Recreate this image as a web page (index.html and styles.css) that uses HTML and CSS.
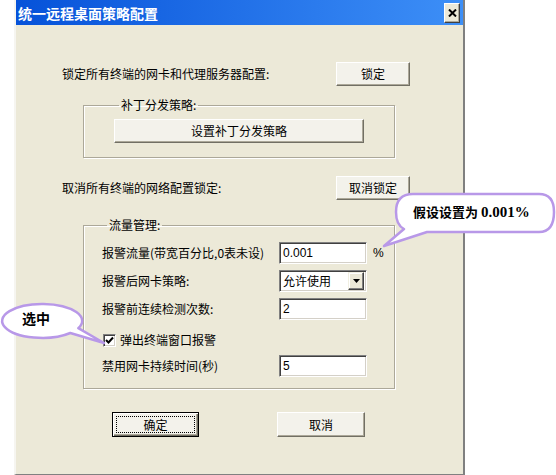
FILE: index.html
```html
<!DOCTYPE html>
<html lang="zh-CN">
<head>
<meta charset="utf-8">
<title>统一远程桌面策略配置</title>
<link rel="stylesheet" href="styles.css">
</head>
<body>
<div class="window">
  <div class="titlebar">
    <span class="title">统一远程桌面策略配置</span>
    <span class="close"><svg width="9" height="8" viewBox="0 0 9 8"><path d="M1 0.5 L8 7.5 M8 0.5 L1 7.5" stroke="#000" stroke-width="2"/></svg></span>
  </div>
  <div class="content">
    <div class="row r1">
      <span>锁定所有终端的网卡和代理服务器配置:</span>
      <button class="btn">锁定</button>
    </div>
    <fieldset class="group g1">
      <legend>补丁分发策略:</legend>
      <button class="btn wide">设置补丁分发策略</button>
    </fieldset>
    <div class="row r2">
      <span>取消所有终端的网络配置锁定:</span>
      <button class="btn">取消锁定</button>
    </div>
    <fieldset class="group g2">
      <legend>流量管理:</legend>
      <div class="field fa">
        <span class="lbl">报警流量(带宽百分比,0表未设)</span>
        <span class="input">0.001</span>
        <span class="unit">%</span>
      </div>
      <div class="field fb">
        <span class="lbl">报警后网卡策略:</span>
        <span class="input select"><span class="sel-text">允许使用</span><span class="drop"><svg width="7" height="4" viewBox="0 0 7 4"><path d="M0 0 H7 L3.5 4 Z" fill="#000"/></svg></span></span>
      </div>
      <div class="field fc">
        <span class="lbl">报警前连续检测次数:</span>
        <span class="input">2</span>
      </div>
      <div class="field fd">
        <span class="check"><svg width="9" height="9" viewBox="0 0 9 9"><path d="M1 4 L3.5 6.5 L8 1.5" stroke="#000" stroke-width="2" fill="none"/></svg></span>
        <span class="check-lbl">弹出终端窗口报警</span>
      </div>
      <div class="field fe">
        <span class="lbl">禁用网卡持续时间(秒)</span>
        <span class="input">5</span>
      </div>
    </fieldset>
    <div class="actions">
      <button class="btn act default"><span class="focus">确定</span></button>
      <button class="btn act">取消</button>
    </div>
  </div>
</div>

<svg class="bubbles" width="556" height="475" viewBox="0 0 556 475">
  <path d="M413 194 H539 Q554 194 554 212 Q554 232 539 232 H427 L384 246 L404 229 Q396 225 396 212 Q396 194 413 194 Z" fill="#fff" stroke="#B898E8" stroke-width="2.5" stroke-linejoin="round"/>
  <path d="M78.3 328.2 A40 17 0 1 0 70.3 333 L104 343 Z" fill="#fff" stroke="#B898E8" stroke-width="2.5" stroke-linejoin="round"/>
</svg>
<div class="callout c1"><span class="cjk">假设设置为</span> <span class="num">0.001%</span></div>
<div class="callout c2">选中</div>
</body>
</html>
```

FILE: styles.css
```css
body {
  margin: 0;
  width: 556px;
  height: 475px;
  overflow: hidden;
  position: relative;
  background: #fff;
  font-family: "Noto Sans CJK SC", "Liberation Sans", sans-serif;
  font-size: 12px;
  line-height: 14px;
  color: #000;
}

.window {
  margin-left: 14px;
  width: 451px;
  height: 475px;
  box-sizing: border-box;
  background: #ECE9D8;
  border-left: 2px solid #F6F5F0;
  border-right: 2px solid #808080;
  border-bottom: 1px solid #808080;
}

.titlebar {
  height: 25px;
  box-sizing: border-box;
  padding: 0 3px 0 2px;
  display: flex;
  align-items: center;
  justify-content: space-between;
  background: linear-gradient(to right, #0652D9, #3D8FF7);
}

.title {
  color: #fff;
  font-weight: bold;
  font-size: 14px;
  line-height: 16px;
}

.close {
  width: 16px;
  height: 20px;
  box-sizing: border-box;
  background: #ECE9D8;
  border: 1px solid;
  border-color: #fff #404040 #404040 #fff;
  box-shadow: inset -1px -1px #ACA899;
  display: flex;
  align-items: center;
  justify-content: center;
}

.content {
  padding-left: 46px;
}

.row {
  width: 348px;
  height: 24px;
  display: flex;
  align-items: center;
  justify-content: space-between;
}

.r1 { margin-top: 37px; }
.r2 { margin-top: 18px; }

.btn {
  width: 74px;
  height: 24px;
  box-sizing: border-box;
  padding: 0;
  font-family: inherit;
  font-size: 12px;
  line-height: 14px;
  color: #000;
  background: #F3F2EB;
  border: 1px solid;
  border-color: #fff #716F64 #716F64 #fff;
  box-shadow: inset -1px -1px #ACA899;
}

.group {
  margin: 12px 0 0 21px;
  width: 312px;
  box-sizing: border-box;
  border: 1px solid #ACA899;
  box-shadow: 1px 1px 0 #fff, inset 1px 1px 0 #fff;
  padding: 0;
  min-width: 0;
}

.group legend {
  margin-left: 5px;
  padding: 0 2px;
  font-size: 12px;
  line-height: 14px;
}

.g1 {
  padding: 0 0 14px 30px;
}

.wide {
  width: 250px;
  height: 24px;
  margin-top: 7px;
  display: block;
}

.g2 {
  margin-top: 18px;
  padding: 0 0 11px 18px;
}

.field {
  height: 22px;
  display: flex;
  align-items: center;
}

.fa { margin-top: 10px; }
.fb { margin-top: 6px; }
.fc { margin-top: 6px; }
.fd { margin-top: 9px; }
.fe { margin-top: 4px; }

.lbl {
  width: 177px;
}

.input {
  width: 88px;
  height: 22px;
  box-sizing: border-box;
  background: #fff;
  border: 1px solid;
  border-color: #808080 #fff #fff #808080;
  box-shadow: inset 1px 1px #404040, inset -1px -1px #D4D0C8;
  padding-left: 3px;
  line-height: 20px;
  font-family: "Liberation Sans", sans-serif;
  font-size: 12px;
}

.select {
  display: flex;
  align-items: center;
  justify-content: space-between;
  padding: 2px;
  font-family: "Noto Sans CJK SC", sans-serif;
}

.sel-text {
  padding-left: 1px;
  line-height: 16px;
}

.drop {
  width: 16px;
  height: 18px;
  box-sizing: border-box;
  background: #ECE9D8;
  border: 1px solid;
  border-color: #F1EFE2 #404040 #404040 #F1EFE2;
  box-shadow: inset -1px -1px #808080, inset 1px 1px #fff;
  display: flex;
  align-items: center;
  justify-content: center;
}

.unit {
  margin-left: 6px;
  font-family: "Liberation Sans", sans-serif;
}

.check {
  width: 13px;
  height: 13px;
  box-sizing: border-box;
  margin-left: 1px;
  background: #fff;
  border: 1px solid;
  border-color: #808080 #fff #fff #808080;
  box-shadow: inset 1px 1px #404040, inset -1px -1px #D4D0C8;
  display: flex;
  align-items: center;
  justify-content: center;
}

.check-lbl {
  margin-left: 4px;
}

.actions {
  margin-top: 23px;
  padding-left: 50px;
  display: flex;
  gap: 78px;
}

.act {
  width: 88px;
  height: 25px;
}

.default {
  width: 87px;
  border: 1px solid #000;
  box-shadow: inset 1px 1px #fff, inset -1px -1px #716F64, inset -2px -2px #ACA899;
  display: flex;
  padding: 3px;
}

.focus {
  flex: 1;
  border: 1px dotted #000;
  display: flex;
  align-items: center;
  justify-content: center;
}

.bubbles {
  position: absolute;
  left: 0;
  top: 0;
  pointer-events: none;
}

.callout {
  position: absolute;
  font-weight: bold;
  white-space: nowrap;
}

.c1 {
  left: 413px;
  top: 203px;
  font-size: 13px;
  line-height: 18px;
}

.c1 .num {
  font-family: "Liberation Serif", serif;
  font-size: 15px;
}

.c2 {
  left: 22px;
  top: 310px;
  font-size: 14px;
  line-height: 16px;
}
```
